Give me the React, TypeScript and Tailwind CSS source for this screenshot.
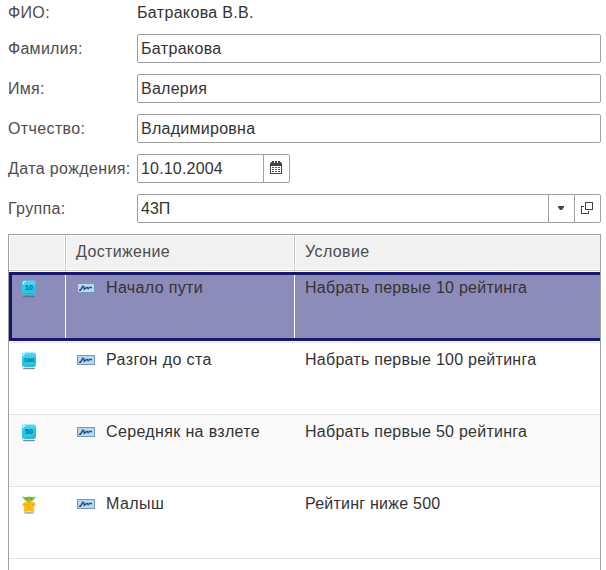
import React from "react";

function Label({ children, tracking = "tracking-[0.35px]" }: { children: React.ReactNode; tracking?: string }) {
  return <div className={"w-[129px] shrink-0 whitespace-nowrap text-[#4d4d4d] " + tracking}>{children}</div>;
}

function Field({
  label,
  value,
  labelTracking,
  tracking,
}: {
  label: string;
  value: string;
  labelTracking: string;
  tracking: string;
}) {
  return (
    <div className="flex h-[29px] items-center">
      <Label tracking={labelTracking}>{label}</Label>
      <div
        className={
          "flex h-[29px] w-[464px] items-center rounded-[2px] border border-[#a0a0a0] bg-white pl-[3px] " + tracking
        }
      >
        {value}
      </div>
    </div>
  );
}

function CalendarIcon() {
  return (
    <svg width="12" height="13" viewBox="0 0 12 13" shapeRendering="crispEdges">
      <path fill="#444" d="M0 1h12v12H0z" />
      <path fill="#444" d="M2 0h2v3H2zM8 0h2v3H8z" />
      <path fill="#fff" d="M0 1h1v1H0zM4 1h1v1H4zM7 1h1v1H7zM11 1h1v1h-1zM1 5h10v7H1z" />
      <path fill="#444" d="M5 0h2v1H5z" />
      <path
        fill="#555"
        d="M5 6h2v1H5zM8 6h2v1H8zM2 8h2v1H2zM5 8h2v1H5zM8 8h2v1H8zM2 10h2v1H2zM5 10h2v1H5zM8 10h2v1H8zM2 6h2v1H2z"
      />
    </svg>
  );
}

function OpenIcon() {
  return (
    <svg width="12" height="12" viewBox="0 0 12 12" fill="none" stroke="#444" shapeRendering="crispEdges">
      <path d="M4.500.5h7v7h-7z" />
      <path d="M3 4.500H.5v7h7V9" />
    </svg>
  );
}

function Tile({ n }: { n: string }) {
  return (
    <svg width="16" height="18" viewBox="0 0 16 18" className="block">
      <defs>
        <linearGradient id={"tile" + n} x1="0" y1="0" x2="0" y2="1">
          <stop offset="0" stopColor="#4cdcf5" />
          <stop offset="0.5" stopColor="#2dcbea" />
          <stop offset="1" stopColor="#2fc0dc" />
        </linearGradient>
      </defs>
      <rect x="2" y="15.700" width="12" height="1.500" rx=".7" fill="#666" opacity=".75" />
      <rect x="1" y="0.500" width="14" height="14.500" rx="2.500" fill={"url(#tile" + n + ")"} />
      <path d="M2 4Q2 1.500 4.500 1.500" stroke="#d5faff" strokeWidth="1.200" fill="none" />
      <path d="M14 4v7q0 2.500-2.500 2.500H5" stroke="#20aecb" strokeWidth=".8" fill="none" />
      <text
        x="8"
        y="10"
        textAnchor="middle"
        fontFamily="Liberation Sans"
        fontWeight="bold"
        fontSize={n.length > 2 ? 6 : 7.200}
        fill="#08789a"
        stroke="#08789a"
        strokeWidth=".2"
      >
        {n}
      </text>
    </svg>
  );
}

function Creature() {
  return (
    <svg width="16" height="18" viewBox="0 0 16 18" className="block">
      <ellipse cx="8" cy="16.800" rx="5.500" ry=".9" fill="#aaa" />
      <path d="M4 6Q1 7 1.500 9.500L3.300 10.500 2.800 15.700h4l1.200-.7 1.200.7h4L12.700 10.500l1.800-1Q15 7 12 6z" fill="#ffbd14" />
      <path d="M8 7.500V14M4 10l1-2M12.500 10l-1-2" stroke="#ef9800" strokeWidth=".8" fill="none" />
      <path d="M1 .5l4 .7Q8 0 11 1.200L15 .5 12.500 4 10 5.800H6L3.500 4z" fill="#83c531" />
      <path d="M5 2.500h1.500M9.500 2.500H11" stroke="#4d7520" />
      <path d="M6 5.500h4L8 7z" fill="#df9228" />
    </svg>
  );
}

function ChartIcon() {
  return (
    <svg width="18" height="10" viewBox="0 0 18 10" className="block">
      <rect x=".5" y=".5" width="17" height="9" fill="#b9d8ef" stroke="#7895ba" />
      <path
        d="M2 7.200H3.500L5.800 3.200Q7 3 7.200 6.200L10 4.300 11.200 5.600 12.500 4.500H15"
        fill="none"
        stroke="#184f91"
        strokeWidth="1.400"
      />
    </svg>
  );
}

const rows = [
  {
    icon: <Tile n="10" />,
    name: "Начало пути",
    nameTracking: "tracking-[0.36px]",
    rule: "Набрать первые 10 рейтинга",
    ruleTracking: "tracking-[0.26px]",
  },
  {
    icon: <Tile n="100" />,
    name: "Разгон до ста",
    nameTracking: "tracking-[0.4px]",
    rule: "Набрать первые 100 рейтинга",
    ruleTracking: "tracking-[0.26px]",
  },
  {
    icon: <Tile n="50" />,
    name: "Середняк на взлете",
    nameTracking: "tracking-[0.36px]",
    rule: "Набрать первые 50 рейтинга",
    ruleTracking: "tracking-[0.26px]",
  },
  {
    icon: <Creature />,
    name: "Малыш",
    nameTracking: "tracking-[0.45px]",
    rule: "Рейтинг ниже 500",
    ruleTracking: "tracking-[0.23px]",
  },
];

function Row({ index }: { index: number }) {
  const r = rows[index];
  const selected = index === 0;
  return (
    <div className={"h-[72px] border-b border-[#e3e3e3] " + (index === 2 ? "bg-[#fafafa]" : "bg-white")}>
      <div className={selected ? "h-[71px] py-px" : "h-[71px]"}>
        <div
          className={
            selected
              ? "flex h-[69px] border-y-[3px] border-l-[3px] border-[#17176f] bg-[#8c8cba]"
              : "flex h-[71px] pt-[4px] pl-[3px]"
          }
        >
          <div className={"w-[54px] shrink-0 pt-[5px] pl-[9px] " + (selected ? "border-r border-white" : "")}>
            {r.icon}
          </div>
          <div className={"flex w-[229px] shrink-0 pl-[11px] " + (selected ? "border-r border-white" : "")}>
            <div className="pt-[8px]">
              <ChartIcon />
            </div>
            <div className={"pl-[11px] leading-[25px] whitespace-nowrap " + r.nameTracking}>{r.name}</div>
          </div>
          <div className={"pl-[10px] leading-[25px] whitespace-nowrap " + r.ruleTracking}>{r.rule}</div>
        </div>
      </div>
    </div>
  );
}

export default function App() {
  return (
    <div className="h-[570px] w-[606px] overflow-hidden bg-white pl-[8px] font-['Liberation_Sans',Arial,sans-serif] text-[16px] leading-[20px] text-[#333]">
      <div className="flex h-[34px] pt-[3px]">
        <Label>ФИО:</Label>
        <div className="tracking-[0.34px]">Батракова В.В.</div>
      </div>
      <div className="flex flex-col gap-[11px]">
        <Field label="Фамилия:" value="Батракова" labelTracking="tracking-[0.28px]" tracking="tracking-[0.34px]" />
        <Field label="Имя:" value="Валерия" labelTracking="tracking-[0.25px]" tracking="tracking-[0.25px]" />
        <Field label="Отчество:" value="Владимировна" labelTracking="tracking-[0.38px]" tracking="tracking-[0.27px]" />
        <div className="flex h-[29px] items-center">
          <Label tracking="tracking-[0.38px]">Дата рождения:</Label>
          <div className="flex h-[29px] w-[153px] rounded-[2px] border border-[#a0a0a0]">
            <div className="flex w-[125px] items-center pl-[3px] tracking-[0.18px]">10.10.2004</div>
            <div className="flex w-[26px] items-start border-l border-[#a0a0a0] pt-[6px] pl-[6px]">
              <CalendarIcon />
            </div>
          </div>
        </div>
        <div className="flex h-[29px] items-center">
          <Label>Группа:</Label>
          <div className="flex h-[29px] w-[464px] rounded-[2px] border border-[#a0a0a0]">
            <div className="flex w-[410px] items-center pl-[3px]">43П</div>
            <div className="w-[26px] border-l border-[#a0a0a0] pt-[11px] pl-[9px]">
              <svg width="6" height="4" viewBox="0 0 6 4" className="block">
                <path d="M0 0h6v1L4 4H2L0 1z" fill="#444" />
              </svg>
            </div>
            <div className="w-[26px] border-l border-[#a0a0a0] pt-[7px] pl-[6px]">
              <OpenIcon />
            </div>
          </div>
        </div>
      </div>
      <div className="mt-[11px] h-[345px] w-[593px] border border-b-0 border-[#a0a0a0]">
        <div className="flex h-[36px] border-b border-[#c8c8c8] leading-[32px] text-[#4d4d4d]">
          <div className="w-[57px] border-r border-[#c8c8c8] p-px">
            <div className="h-[33px] bg-[#f1f1f1]" />
          </div>
          <div className="w-[229px] border-r border-[#c8c8c8] p-px">
            <div className="h-[33px] bg-[#f1f1f1] pl-[9px] tracking-[0.36px]">Достижение</div>
          </div>
          <div className="grow p-px pr-0">
            <div className="h-[33px] bg-[#f1f1f1] pl-[9px] tracking-[0.4px]">Условие</div>
          </div>
        </div>
        {rows.map((r, i) => (
          <Row key={r.name} index={i} />
        ))}
      </div>
    </div>
  );
}
